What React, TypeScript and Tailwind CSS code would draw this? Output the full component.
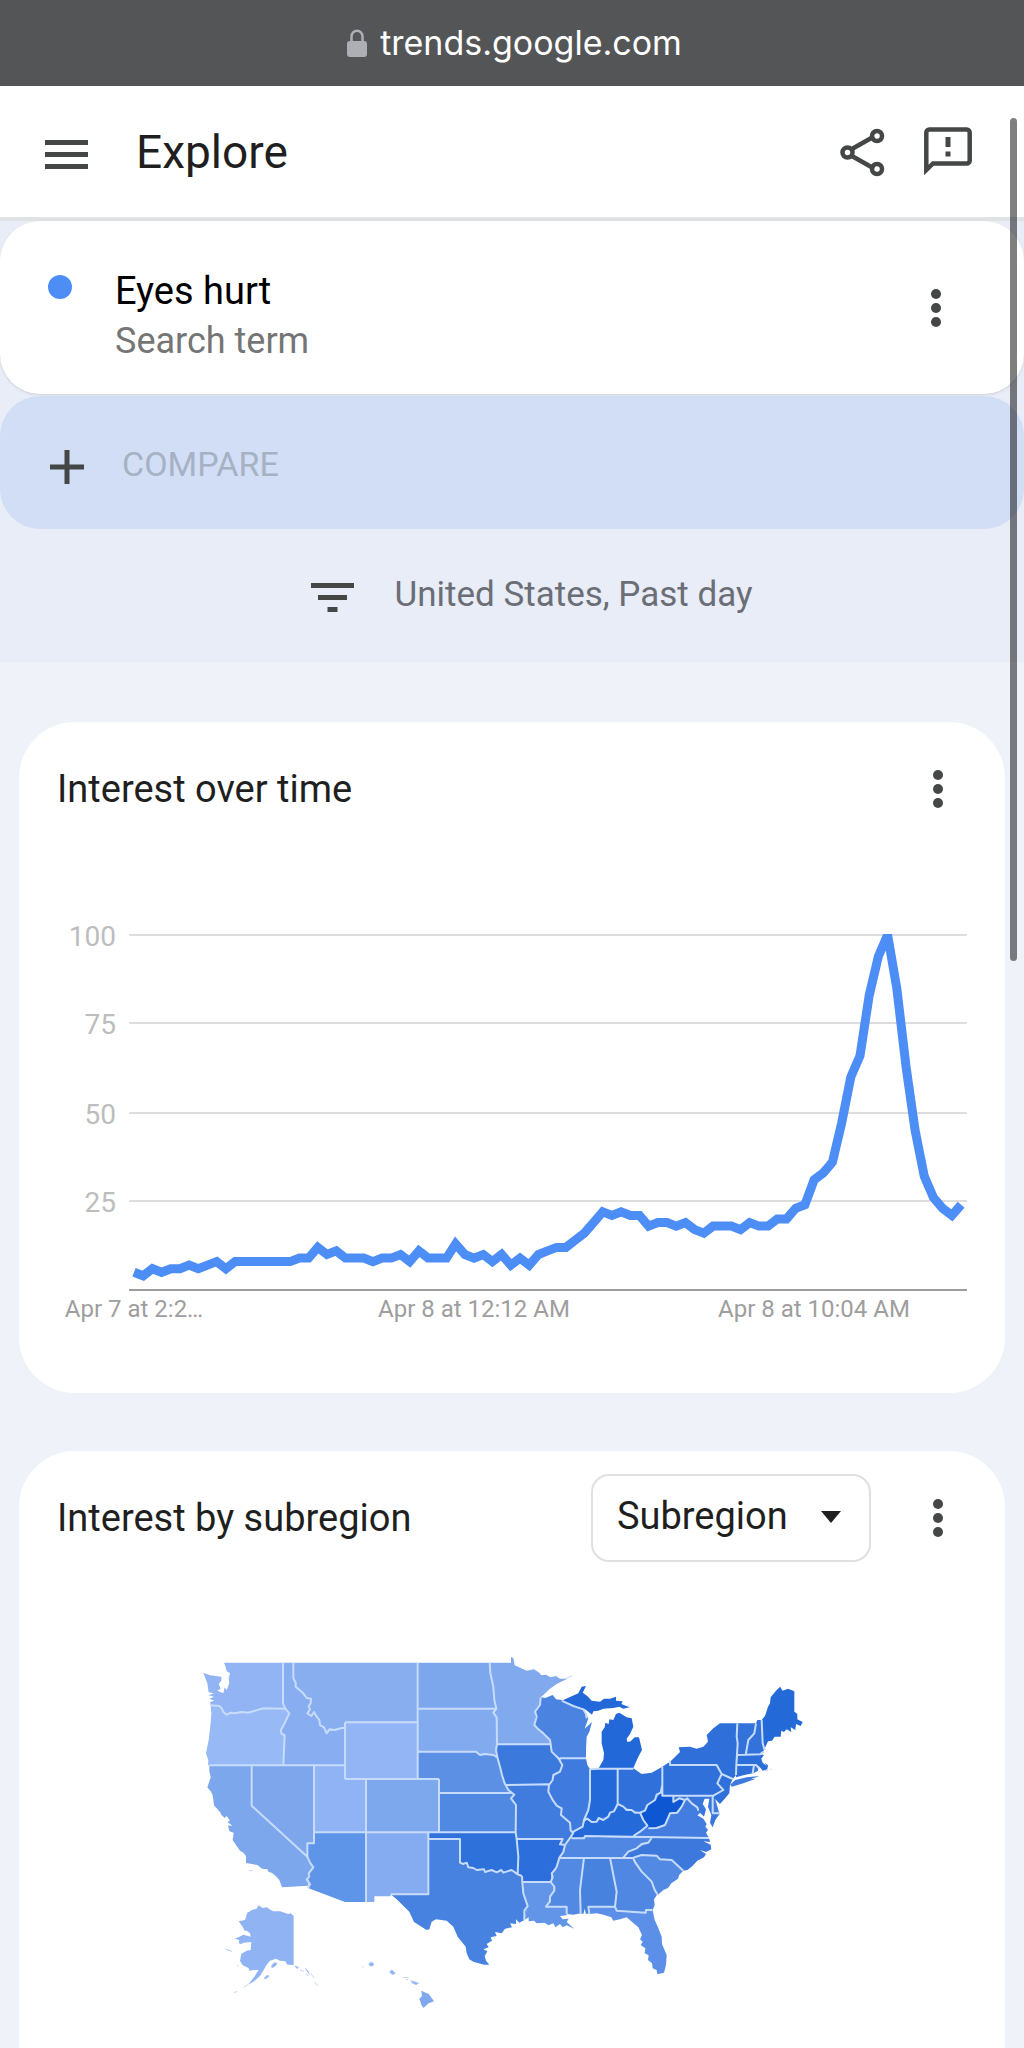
import React from 'react';

const INTEREST = [
  5, 4, 6, 5, 6, 6, 7, 6, 7, 8, 6, 8, 8, 8, 8, 8, 8, 8, 9, 9, 12, 10, 11, 9, 9, 9, 8, 9, 9, 10, 8, 11, 9, 9, 9, 13,
  10, 9, 10, 8, 10, 7, 9, 7, 10, 11, 12, 12, 14, 16, 19, 22, 21, 22, 21, 21, 18, 19, 19, 18, 19, 17, 16, 18, 18, 18,
  17, 19, 18, 18, 20, 20, 23, 24, 31, 33, 36, 47, 60, 66, 83, 94, 100, 85, 63, 45, 32, 26, 23, 21, 24,
];

const GRID = [
  { value: 100, y: 15 },
  { value: 75, y: 103 },
  { value: 50, y: 193 },
  { value: 25, y: 281 },
];

interface Region {
  name: string;
  fill: string;
  points: string;
}

const REGIONS: Region[] = [
  { name: 'Washington', fill: '#92b4f4', points: '132,68 309,68 309,190 316,208 250,205 205,216 165,218 140,224 130,214 122,200 92,196 90,186 103,182 88,176 102,170 86,166 102,160 86,157 82,130 70,98 90,106 124,110 124,122 116,132 122,146 112,152 130,160 134,142 140,150 148,130 146,116 150,100 140,94 136,78' },
  { name: 'Oregon', fill: '#97b9f5', points: '92,196 122,200 130,214 140,224 165,218 205,216 250,205 316,206 328,220 316,245 303,270 303,280 314,286 310,376 84,376 85,360 78,340 86,300 92,250 94,220' },
  { name: 'Idaho', fill: '#88adf0', points: '309,68 340,68 345,115 350,140 370,160 393,176 400,215 440,275 495,262 495,376 310,376 314,286 303,280 303,270 316,245 328,220 316,206 309,190' },
  { name: 'Montana', fill: '#88aef0', points: '340,68 713,68 713,247 495,247 495,264 455,268 440,280 432,262 420,255 410,230 400,215 394,228 384,222 390,205 386,198 393,176 380,174 370,160 347,140 347,128 340,115' },
  { name: 'Wyoming', fill: '#93b4f5', points: '495,247 713,247 713,417 495,417' },
  { name: 'Utah', fill: '#8fb3f4', points: '402,376 495,376 495,417 558,417 558,577 402,577' },
  { name: 'Nevada', fill: '#7da6ed', points: '215,376 402,376 402,610 382,610 382,650 215,497' },
  { name: 'California', fill: '#7da7ed', points: '88,376 215,376 215,497 382,650 390,668 400,682 386,705 385,737 306,742 298,720 285,706 275,698 266,696 262,688 246,686 232,675 198,669 198,648 190,638 180,632 170,618 158,600 161,578 148,574 144,556 158,558 142,546 150,542 140,528 134,534 124,524 120,516 102,496 98,465 92,454 82,442 92,412 88,394' },
  { name: 'Arizona', fill: '#5e95e8', points: '402,577 558,577 558,786 495,786 384,744 390,735 383,712 388,700 400,682 390,668 382,650 382,610 402,610' },
  { name: 'Colorado', fill: '#7da8ed', points: '558,417 777,417 777,577 558,577' },
  { name: 'New Mexico', fill: '#85abf1', points: '558,577 745,577 745,763 632,763 632,769 583,769 583,786 558,786' },
  { name: 'North Dakota', fill: '#7da7ed', points: '713,68 929,68 931,100 940,140 943,180 947,206 713,206' },
  { name: 'South Dakota', fill: '#81aaef', points: '713,206 947,206 940,218 950,232 951,312 948,330 952,352 940,345 915,342 900,345 888,335 713,335' },
  { name: 'Nebraska', fill: '#5b90e5', points: '713,335 888,335 900,345 915,342 940,345 952,352 960,380 966,405 974,430 985,450 992,459 778,459 777,417 713,417' },
  { name: 'Kansas', fill: '#5089e2', points: '778,459 992,459 1003,464 995,475 1008,495 1007,577 777,577' },
  { name: 'Texas', fill: '#4782e0', points: '745,590 1000,590 1026,708 1030,760 1043,798 1033,840 1018,848 1008,838 1008,852 990,850 996,862 975,866 965,880 945,876 950,888 932,892 936,902 920,912 926,922 910,928 922,934 914,948 918,962 928,974 912,974 880,965 868,958 860,940 857,920 833,890 820,860 800,842 768,838 755,845 748,868 740,870 702,846 688,815 650,778 632,763 745,763' },
  { name: 'Oklahoma', fill: '#2f71db', points: '745,577 1007,577 1010,597 1015,650 1013,703 995,692 970,696 960,693 950,697 935,692 915,696 890,690 865,682 850,672 840,668 840,597 745,597' },
  { name: 'Minnesota', fill: '#81aaee', points: '929,68 993,68 993,50 1000,55 1004,76 1022,84 1040,92 1062,88 1078,98 1084,106 1098,104 1112,112 1128,108 1140,116 1162,116 1130,132 1108,148 1090,165 1082,172 1080,195 1065,215 1065,255 1090,280 1110,300 1112,313 951,313 950,232 940,218 947,206 943,180 940,140 931,100' },
  { name: 'Iowa', fill: '#3c79dd', points: '951,313 1112,313 1115,335 1135,355 1147,375 1140,395 1120,405 1118,420 1107,435 976,435 966,405 952,350 948,330' },
  { name: 'Missouri', fill: '#407cde', points: '976,435 1107,435 1105,455 1118,480 1130,495 1145,505 1143,525 1170,548 1172,572 1180,585 1165,597 1155,615 1140,613 1148,597 1010,597 1007,577 1008,495 995,475 1003,464 985,450' },
  { name: 'Arkansas', fill: '#2c6edb', points: '1010,597 1148,597 1140,613 1155,615 1145,645 1130,680 1115,700 1112,726 1027,726 1026,708 1013,703 1015,650' },
  { name: 'Louisiana', fill: '#6294e8', points: '1027,726 1115,726 1123,752 1110,770 1098,800 1160,800 1160,826 1140,828 1148,838 1166,836 1160,846 1182,866 1160,856 1148,862 1140,852 1126,862 1120,850 1105,856 1094,848 1070,850 1062,842 1046,844 1046,832 1033,840 1043,798 1030,760' },
  { name: 'Wisconsin', fill: '#4a84e0', points: '1082,172 1096,174 1118,165 1128,178 1145,180 1150,187 1180,198 1210,208 1218,222 1225,235 1214,266 1236,246 1228,275 1220,290 1218,330 1218,355 1140,355 1115,335 1112,313 1110,300 1090,280 1065,255 1065,215 1080,195' },
  { name: 'Illinois', fill: '#3f7bde', points: '1140,355 1218,355 1222,375 1230,388 1230,480 1225,510 1212,540 1208,560 1180,580 1172,572 1170,548 1143,525 1145,505 1130,495 1105,455 1107,435 1118,420 1120,405 1140,395 1147,375' },
  { name: 'Indiana', fill: '#2469d9', points: '1230,388 1255,385 1313,386 1313,495 1300,510 1285,530 1265,535 1250,545 1212,542 1225,510 1230,480' },
  { name: 'Michigan', fill: '#2268d8', points: '1255,386 1270,360 1272,340 1265,310 1265,275 1274,262 1276,248 1286,252 1288,238 1300,240 1308,222 1318,218 1340,232 1355,235 1360,260 1350,282 1340,296 1342,306 1352,304 1364,292 1377,292 1386,330 1375,350 1360,384' },
  { name: 'Michigan (Upper Peninsula)', fill: '#2268d8', points: '1145,182 1195,160 1205,140 1218,138 1208,158 1222,168 1235,182 1260,185 1272,176 1290,176 1308,170 1308,182 1328,184 1324,192 1348,202 1330,206 1318,200 1300,204 1270,206 1255,212 1240,214 1236,224 1226,216 1215,208 1180,198 1150,187' },
  { name: 'Ohio', fill: '#3070da', points: '1313,386 1360,385 1385,402 1415,398 1447,380 1447,435 1440,460 1425,480 1402,495 1395,512 1380,518 1355,510 1330,500 1313,492' },
  { name: 'Kentucky', fill: '#256ad9', points: '1313,492 1330,500 1355,510 1380,518 1390,540 1402,557 1380,575 1355,592 1215,590 1212,597 1175,595 1180,578 1208,560 1215,540 1250,545 1265,535 1285,530 1300,510' },
  { name: 'Tennessee', fill: '#4f87e2', points: '1170,595 1212,597 1215,590 1415,594 1405,608 1370,625 1345,635 1330,653 1138,653 1150,625' },
  { name: 'Virginia', fill: '#427ddf', points: '1515,478 1535,490 1555,506 1560,520 1552,526 1570,536 1580,552 1576,560 1584,570 1578,578 1587,594 1352,592 1380,575 1402,557 1430,562 1455,555 1470,520 1485,520 1505,500' },
  { name: 'Maryland', fill: '#3a77dc', points: '1480,468 1598,468 1600,520 1620,520 1606,540 1598,562 1590,548 1594,526 1584,500 1588,476 1574,476 1568,492 1578,508 1572,530 1552,510 1535,490 1515,478 1498,475 1480,485' },
  { name: 'Delaware', fill: '#427ddf', points: '1598,470 1604,472 1618,520 1600,520' },
  { name: 'West Virginia', fill: '#0d57d2', points: '1447,435 1447,467 1480,468 1480,485 1498,475 1515,478 1505,500 1485,520 1470,520 1455,555 1430,562 1405,565 1390,540 1383,518 1395,512 1402,495 1425,480 1440,460' },
  { name: 'Pennsylvania', fill: '#2f70da', points: '1447,380 1470,365 1470,375 1610,375 1625,400 1612,430 1630,450 1600,468 1447,467' },
  { name: 'New York', fill: '#2e6fda', points: '1470,375 1472,364 1500,336 1496,322 1530,320 1550,326 1570,320 1584,305 1580,285 1600,265 1620,250 1672,250 1670,290 1673,310 1669,375 1668,405 1658,417 1625,402 1610,375' },
  { name: 'Long Island', fill: '#3f7bde', points: '1650,434 1666,420 1700,412 1738,408 1712,418 1728,416 1690,430 1656,440' },
  { name: 'New Jersey', fill: '#2f70da', points: '1625,402 1658,417 1650,434 1648,460 1636,474 1620,492 1602,474 1600,468 1630,450 1612,430' },
  { name: 'North Carolina', fill: '#3d79dd', points: '1415,594 1587,594 1590,606 1570,604 1592,614 1594,628 1578,636 1560,630 1578,642 1572,652 1552,662 1535,680 1522,690 1510,692 1475,660 1440,658 1430,647 1385,645 1360,653 1330,653 1345,635 1370,625 1405,608' },
  { name: 'South Carolina', fill: '#528ae3', points: '1360,653 1385,645 1430,647 1440,658 1475,660 1510,692 1498,704 1494,716 1474,730 1464,744 1450,750 1434,764 1415,725 1385,695' },
  { name: 'Georgia', fill: '#4f87e2', points: '1290,653 1360,653 1362,665 1385,695 1415,725 1432,763 1422,778 1424,795 1418,810 1400,812 1397,820 1310,812 1305,800 1310,755' },
  { name: 'Alabama', fill: '#4782df', points: '1212,653 1290,653 1300,705 1310,755 1305,800 1225,800 1228,820 1218,822 1214,806 1210,822 1202,820 1200,750' },
  { name: 'Mississippi', fill: '#528ae3', points: '1142,653 1212,653 1200,750 1202,820 1180,824 1160,822 1160,800 1098,800 1110,770 1123,752 1115,727 1115,700 1130,680' },
  { name: 'Florida', fill: '#5c90e8', points: '1225,800 1305,800 1310,812 1397,820 1400,812 1418,810 1424,840 1434,862 1445,890 1446,912 1460,945 1458,975 1452,998 1432,1003 1430,990 1418,985 1416,970 1404,960 1406,946 1394,940 1396,925 1382,915 1388,905 1380,898 1386,885 1375,862 1352,842 1340,832 1320,838 1300,842 1294,832 1270,824 1250,820 1228,822' },
  { name: 'Vermont', fill: '#3272da', points: '1672,250 1728,250 1723,280 1705,300 1697,345 1673,345 1673,310 1670,290' },
  { name: 'New Hampshire', fill: '#3372da', points: '1728,250 1732,240 1745,240 1748,310 1752,332 1740,343 1697,345 1705,300 1723,280' },
  { name: 'Maine', fill: '#2469d8', points: '1745,240 1755,228 1764,200 1770,190 1772,172 1788,152 1800,140 1808,152 1824,146 1843,154 1843,215 1852,222 1852,238 1868,246 1862,258 1848,252 1846,270 1832,262 1834,276 1820,268 1812,276 1804,272 1802,290 1784,290 1776,302 1764,304 1752,330 1748,310' },
  { name: 'Massachusetts', fill: '#2c6fda', points: '1673,345 1740,343 1752,345 1744,356 1748,368 1760,378 1754,368 1764,376 1762,388 1748,392 1740,382 1730,374 1670,375' },
  { name: 'Connecticut', fill: '#2e6fda', points: '1669,375 1722,375 1718,400 1690,406 1668,412' },
  { name: 'Rhode Island', fill: '#3875dc', points: '1720,375 1734,375 1734,392 1720,400' },
  { name: 'Alaska', fill: '#8fb3f3', points: '236,796 248,804 262,802 268,808 280,814 300,814 325,822 332,820 341,828 341,975 322,974 316,964 300,962 288,956 270,962 260,974 254,985 240,1008 222,1024 204,1034 222,1012 236,990 222,990 208,992 206,984 188,976 180,962 184,942 200,932 212,930 214,906 190,908 184,912 176,910 178,900 164,896 178,890 190,884 212,890 210,880 200,872 194,872 188,860 176,844 195,840 202,818 216,810 230,806' },
  { name: 'Hawaii', fill: '#80a8ee', points: '724,1052 746,1062 762,1084 746,1090 730,1104 724,1094 718,1076 726,1068' },
];

// Small islands off Alaska, Hawaii, New England and the Great Lakes
const ISLANDS = [
  'M274,978 l8,-10 l10,2 l-6,8 l-10,6z M252,1016 l8,-10 l8,2 l-10,8z M190,1042 l14,-8 M162,1058 l10,-4',
  'M136,928 l12,2 l8,5 M170,976 l6,2 M344,978 l12,4 l-4,4z M360,990 l12,4 M374,984 l10,8 l4,12 M376,1002 l10,6',
  'M392,1000 l10,14 M404,1026 l10,12',
  'M566,972 l8,-6 l8,6 l-4,6 l-8,0z M546,980 l5,1 M628,996 l8,-6 l10,10 l-8,4z M668,1012 l18,1 M692,1022 l14,4 l10,4 l-8,4 l-10,-4z M678,1018 l6,2',
  'M208,692 l10,-1 M1156,116 l20,-8 M1342,196 l8,6 M1755,392 l10,0 M1770,388 l6,0',
];

const BORDERS = [
  'M309,68 V190 L316,206 L328,220 L316,245 L303,270 L304,280 L314,286 L310,376',
  'M92,196 L118,198 L126,206 L130,216 L140,224 L152,218 L165,220 L185,216 L205,218 L250,205 L316,206',
  'M340,68 V115 L347,128 L347,140 L370,160 L380,174 L393,176 L392,190 L386,198 L390,208 L382,220 L394,228 L402,216 L410,230 L418,240 L420,255 L432,262 L440,280 L448,268 L465,270 L485,264 L495,264',
  'M88,376 H495 M495,247 H713 M495,247 V417 M713,68 V417 M495,417 H777 M558,417 V786 M402,376 V610 H382 V650',
  'M215,376 V497 L382,650 L390,668 L400,682 L386,700 L388,710 L380,718 L390,732 L384,744',
  'M402,577 H1007 M777,417 V577 M745,577 V763 H632 M745,597 H840 V668 L850,672 L860,668 L865,682 L880,684 L890,690 L912,688 L915,696 L935,690 L950,697 L964,690 L970,698 L995,690 L1013,703 L1026,708',
  'M713,206 H947 M713,335 H888 L900,345 L915,342 L940,345 L952,352 M778,459 H992',
  'M929,68 L931,100 L940,140 L943,180 L949,206 L940,218 L950,232 L951,312 L948,330 L952,352 L960,380 L966,405 L974,430 L985,450 L1003,464 L993,475 L1008,495 L1007,577 L1010,597 L1015,650 L1013,703',
  'M951,313 H1112 M976,435 L1107,433 M1010,597 H1148 L1140,613 L1155,615 M1027,726 H1113',
  'M1082,172 L1080,195 L1065,215 L1070,230 L1063,255 L1075,268 L1090,280 L1110,300 L1112,313 L1115,335 L1135,355 L1147,375 L1140,395 L1120,405 L1118,420 L1107,435 L1105,455 L1118,480 L1130,497 L1145,505 L1143,525 L1170,548 L1172,572 L1180,578 L1168,597 L1155,615 L1150,636 L1138,653 L1130,680 L1124,690 L1115,700 L1118,712 L1112,726 L1123,740 L1123,752 L1110,770 L1110,784 L1098,800 H1160 V822',
  'M1140,355 H1218 M1145,182 L1180,198 L1210,208 L1218,222 L1220,235 M1230,388 V480 L1225,510 L1212,540 L1208,560 L1180,575 M1230,388 L1255,386 H1360 M1313,386 V492',
  'M1212,542 L1222,536 L1235,546 L1250,545 L1256,534 L1270,540 L1285,530 L1290,518 L1302,514 L1313,492 L1330,500 L1340,510 L1355,510 L1365,518 L1380,518 L1395,512 L1402,495 L1425,480 L1430,464 L1442,458 L1447,435 V380',
  'M1380,518 L1390,540 L1402,557 L1380,575 L1360,588 M1175,595 H1212 L1215,588 L1587,594 M1138,653 L1290,654 L1360,653 L1385,645 L1430,647 L1440,658 L1475,660 L1510,692',
  'M1415,594 L1405,608 L1385,612 L1370,625 L1345,635 L1330,653 M1360,655 L1366,668 L1385,695 L1415,725 L1424,750 L1432,763',
  'M1212,653 L1200,750 L1202,820 M1290,653 L1300,705 L1310,755 L1305,800 H1225 L1228,822 M1305,800 L1310,812 L1397,818 L1398,810 H1418 M1026,708 L1027,727 L1030,760 L1043,798 L1033,812 L1033,840',
  'M1447,435 V467 H1600 L1630,450 L1612,430 L1625,402 L1610,375 H1470 V362 M1625,402 L1658,417',
  'M1480,468 V486 L1498,475 L1515,480 L1505,500 L1492,518 L1470,520 L1455,555 L1430,564 L1405,565 M1515,480 L1522,475 L1535,490 L1552,502 L1555,512 M1598,470 V520 H1618',
  'M1672,250 L1670,290 L1673,310 L1669,375 L1668,405 M1728,250 L1723,280 L1705,300 L1697,345 M1673,345 L1740,343 L1752,334 M1745,240 L1748,310 L1754,330 M1669,375 H1728 L1738,386 M1722,375 L1718,400',
].join(' ');

function MoreButton({ label }: { label: string }) {
  return (
    <button type="button" aria-label={label} className="flex h-12 w-12 shrink-0 items-center justify-center text-[#444746]">
      <svg viewBox="0 0 10 40" className="h-10 w-[10px]" fill="currentColor">
        <circle cx="5" cy="6" r="5" />
        <circle cx="5" cy="20" r="5" />
        <circle cx="5" cy="34" r="5" />
      </svg>
    </button>
  );
}

function TimeChart() {
  const line = INTEREST.map((v, i) => `${(115 + i * 9.19).toFixed(1)},${(370 - v * 3.55).toFixed(1)}`).join(' ');

  return (
    <svg viewBox="0 0 986 420" className="block w-full font-[Roboto,sans-serif]" role="img" aria-label="Interest over time chart">
      <defs>
        <clipPath id="plot">
          <rect x="110" y="14" width="840" height="360" />
        </clipPath>
      </defs>
      {GRID.map((g) => (
        <g key={g.value}>
          <line x1="110" x2="948" y1={g.y} y2={g.y} stroke="#dddddd" strokeWidth="2" />
          <text x="97" y={g.y + 11} textAnchor="end" fontSize="28" fill="#bdbdbd">
            {g.value}
          </text>
        </g>
      ))}
      <line x1="110" x2="948" y1="370" y2="370" stroke="#9e9e9e" strokeWidth="2" />
      <polyline points={line} fill="none" stroke="#4c8df6" strokeWidth="9" clipPath="url(#plot)" />
      <g fontSize="24" fill="#9e9e9e" textAnchor="middle">
        <text x="115" y="397">Apr 7 at 2:2…</text>
        <text x="455" y="397">Apr 8 at 12:12 AM</text>
        <text x="795" y="397">Apr 8 at 10:04 AM</text>
      </g>
    </svg>
  );
}

function UsMap() {
  return (
    <svg viewBox="-483 -30 2958 1254" className="block w-full" role="img" aria-label="Map of the United States">
      {REGIONS.map((r) => (
        <polygon key={r.name} points={r.points} fill={r.fill} />
      ))}
      {ISLANDS.map((d) => (
        <path key={d} d={d} fill="#8fb3f3" stroke="#a9c4f6" strokeWidth="2" />
      ))}
      <path d={BORDERS} fill="none" stroke="#c7dcfb" strokeWidth="6" strokeLinejoin="round" />
    </svg>
  );
}

export default function App() {
  return (
    <div className="relative flex min-h-screen flex-col bg-[#eff3f9] font-[Roboto,sans-serif] text-[#1f1f1f]">
      {/* Browser bar */}
      <div className="flex h-[86px] items-center justify-center gap-3 bg-[#545557] pl-1 text-white">
        <svg viewBox="0 0 22 28" className="h-7 w-[22px]" aria-hidden="true">
          <rect x="1" y="12" width="20" height="16" rx="3" fill="#aeaeb5" />
          <path d="M5.500 13V7.500a5.500 5.800 0 0 1 11 0V13" fill="none" stroke="#aeaeb5" strokeWidth="2.500" />
        </svg>
        <span className="font-[Inter,sans-serif] text-[34px] leading-10">trends.google.com</span>
      </div>

      {/* App bar */}
      <header className="flex h-[135px] items-center border-b-4 border-[#e1e2e4] bg-white pr-[51px] pl-[42px] text-[#444746]">
        <button type="button" aria-label="Main menu" className="flex h-12 w-12 items-center justify-center">
          <svg viewBox="0 0 48 48" className="h-12 w-12" fill="currentColor">
            <path d="M3 12h43v5H3zM3 24h43v5H3zM3 36h43v5H3z" />
          </svg>
        </button>
        <h1 className="ml-[46px] flex-1 text-[46px] leading-[56px] text-[#1f1f1f]">Explore</h1>
        <button type="button" aria-label="Share" className="h-[50px] w-[50px]">
          <svg viewBox="0 0 50 50" className="h-[50px] w-[50px]" fill="none" stroke="currentColor" strokeWidth="4.500">
            <path d="M13 22.500 36 9.500M13 28.500 36 41.500" />
            <circle cx="9.500" cy="25.500" r="5" />
            <circle cx="39" cy="9" r="5" />
            <circle cx="39" cy="42" r="5" />
          </svg>
        </button>
        <button type="button" aria-label="Send feedback" className="ml-[35px] h-[50px] w-[50px]">
          <svg viewBox="0 0 50 50" className="h-[50px] w-[50px]" fill="none" stroke="currentColor" strokeWidth="4.500">
            <path d="M3.300 43V5.500a3 3 0 0 1 3-3h37.400a3 3 0 0 1 3 3v28a3 3 0 0 1-3 3H10z" strokeLinejoin="miter" />
            <path d="M25 10v10M25 24.500v5" strokeWidth="5" />
          </svg>
        </button>
      </header>

      {/* Search term and filters */}
      <section className="bg-[#e9edf7]">
        <div className="flex h-[173px] items-center rounded-[40px] bg-white pr-16 pl-12 shadow-sm">
          <span className="mb-[42px] h-6 w-6 rounded-full bg-[#4c8df6]" />
          <div className="ml-[43px] flex-1 pt-4">
            <p className="text-[38px] leading-[50px] text-black">Eyes hurt</p>
            <p className="text-[36px] leading-[50px] text-[#757575]">Search term</p>
          </div>
          <MoreButton label="Term options" />
        </div>
        <button
          type="button"
          disabled
          className="mt-[2px] flex h-[133px] w-full items-center rounded-[40px] bg-[#d2def5] pt-1 pl-[50px] text-[34px] text-[#a6b2c4]"
        >
          <svg viewBox="0 0 34 34" className="mt-1 h-[34px] w-[34px]" fill="#444746">
            <path d="M14.500 0h5v14.500H34v5H19.500V34h-5V19.500H0v-5h14.500z" />
          </svg>
          <span className="ml-[38px]">COMPARE</span>
        </button>
        <button type="button" className="flex h-[133px] w-full items-center justify-center gap-10 pl-10 text-[35px] text-[#6b6e76]">
          <svg viewBox="0 0 43 29" className="mt-1 h-[29px] w-[43px]" fill="#444746">
            <path d="M0 0h43v5H0zM7 12h29v5H7zM16.500 24h10v5h-10z" />
          </svg>
          <span>United States, Past day</span>
        </button>
      </section>

      <main className="flex flex-1 flex-col gap-[58px] px-[19px] pt-[60px]">
        {/* Interest over time */}
        <section className="rounded-[56px] bg-white pb-[53px]">
          <div className="flex h-[134px] items-center pr-[43px] pl-[38px]">
            <h2 className="flex-1 text-[38px] leading-[44px]">Interest over time</h2>
            <MoreButton label="Chart options" />
          </div>
          <div className="mt-16">
            <TimeChart />
          </div>
        </section>

        {/* Interest by subregion */}
        <section className="flex-1 rounded-t-[56px] bg-white">
          <div className="flex h-[134px] items-center pr-[43px] pl-[38px]">
            <h2 className="flex-1 text-[38px] leading-[44px]">Interest by subregion</h2>
            <div className="relative mr-[43px]">
              <select
                aria-label="Resolution"
                className="block h-[88px] w-[280px] appearance-none rounded-[18px] border-2 border-[#e0e0e0] bg-white pb-1 pl-6 text-[38px]"
              >
                <option>Subregion</option>
              </select>
              <svg viewBox="0 0 20 12" className="pointer-events-none absolute top-[37px] right-[30px] h-3 w-5" fill="#1f1f1f">
                <path d="M0 0h20L10 12z" />
              </svg>
            </div>
            <MoreButton label="Map options" />
          </div>
          <div className="mt-[45px]">
            <UsMap />
          </div>
        </section>
      </main>

      {/* Scroll indicator */}
      <div className="absolute top-[118px] right-[7px] h-[843px] w-[7px] rounded-full bg-black/50" />
    </div>
  );
}
